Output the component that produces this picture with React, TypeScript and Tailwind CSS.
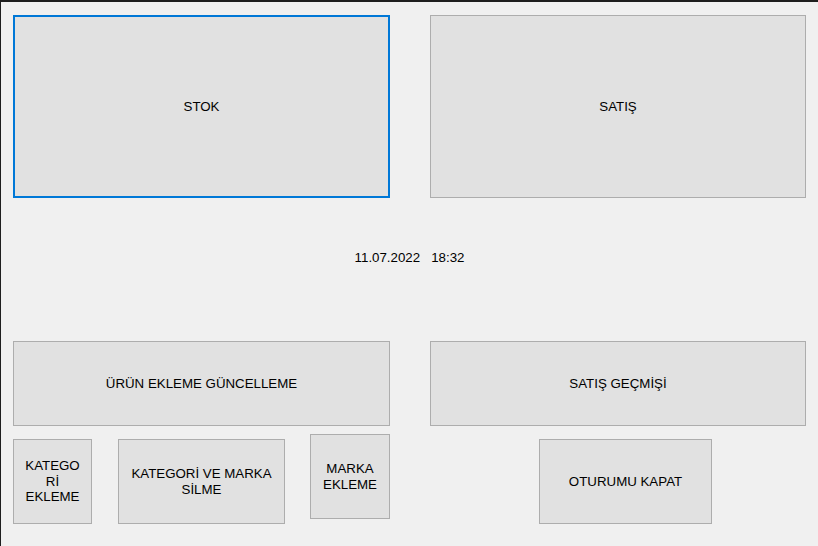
import type { ReactNode } from "react";

// Buton stili (WinForms görünümü)
function FormButton({
  children,
  className = "",
  focused = false,
}: {
  children: ReactNode;
  className?: string;
  focused?: boolean;
}) {
  return (
    <button
      className={`flex shrink-0 items-center justify-center bg-[#e1e1e1] text-center text-[13.3px] leading-[15.5px] text-black ${
        focused ? "border-2 border-[#0078d7]" : "border border-[#adadad]"
      } ${className}`}
    >
      {children}
    </button>
  );
}

export default function App() {
  return (
    <div
      className="flex h-[546px] w-[818px] flex-col overflow-hidden border-l border-t-2 border-[#1e1e1e] bg-[#f0f0f0]"
      style={{ fontFamily: '"Liberation Sans", Arial, sans-serif' }}
    >
      {/* Üst butonlar */}
      <div className="flex pl-[12px] pt-[13px]">
        <FormButton focused className="h-[183px] w-[377px]">
          STOK
        </FormButton>
        <FormButton className="ml-[40px] h-[183px] w-[376px]">SATIŞ</FormButton>
      </div>

      {/* Tarih / saat */}
      <div className="flex h-[143px] justify-center gap-[11px] pt-[52px] text-[13.3px] leading-[16px] text-black">
        <span>11.07.2022</span>
        <span>18:32</span>
      </div>

      {/* Alt butonlar */}
      <div className="flex pl-[12px]">
        <FormButton className="h-[85px] w-[377px]">ÜRÜN EKLEME GÜNCELLEME</FormButton>
        <FormButton className="ml-[40px] h-[85px] w-[376px]">SATIŞ GEÇMİŞİ</FormButton>
      </div>

      <div className="mt-[8px] flex items-start pl-[12px]">
        <FormButton className="mt-[5px] h-[85px] w-[79px]">
          KATEGO
          <br />
          Rİ
          <br />
          EKLEME
        </FormButton>
        <FormButton className="ml-[26px] mt-[5px] h-[85px] w-[167px]">
          KATEGORİ VE MARKA
          <br />
          SİLME
        </FormButton>
        <FormButton className="ml-[25px] h-[85px] w-[80px]">
          MARKA
          <br />
          EKLEME
        </FormButton>
        <FormButton className="ml-[149px] mt-[5px] h-[85px] w-[173px]">OTURUMU KAPAT</FormButton>
      </div>
    </div>
  );
}
